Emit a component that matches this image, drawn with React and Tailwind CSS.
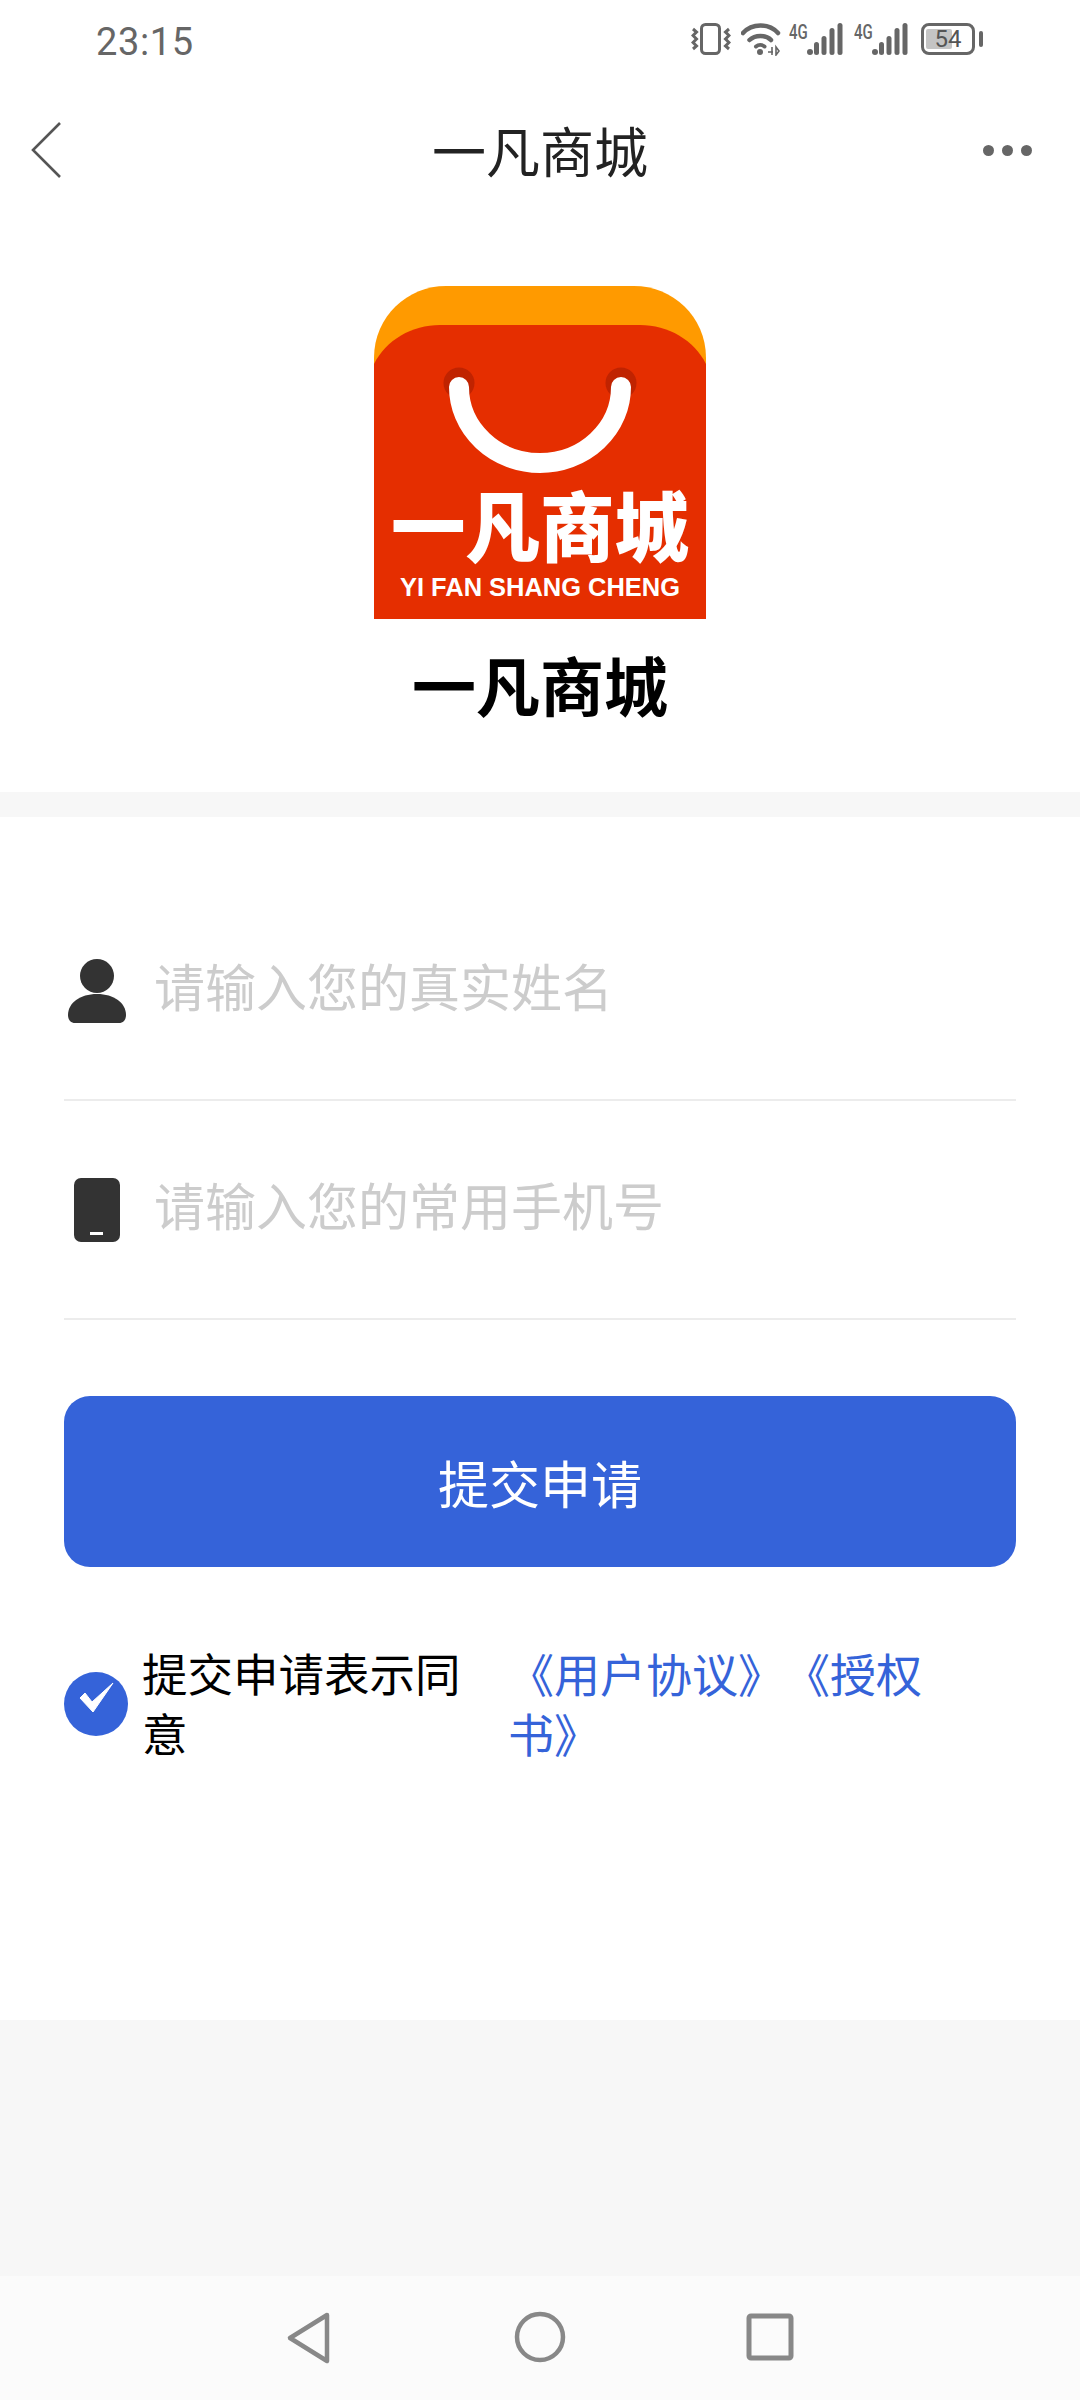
import React from 'react';

const cjk = '"Noto Sans CJK SC", "Noto Sans", sans-serif';

const Signal = () => (
    <div className="relative w-[54px] h-[32px]">
        <span className="absolute left-0 top-[-3px] origin-left scale-x-75 text-[20px] leading-[24px] font-medium text-[#666] font-['Roboto']">4G</span>
        <svg width="54" height="32" viewBox="0 0 54 32">
            <g fill="#666">
                <circle cx="21" cy="29" r="3" />
                <rect x="25" y="19" width="5" height="13" rx="2.5" />
                <rect x="32.5" y="13" width="5" height="19" rx="2.5" />
                <rect x="40.5" y="5" width="5" height="27" rx="2.5" />
                <rect x="48.5" y="0" width="5" height="32" rx="2.5" />
            </g>
        </svg>
    </div>
);

const StatusIcons = () => (
    <div className="ml-auto mr-[97px] mb-[6px] flex items-center h-[32px]">
        <svg width="40" height="32" viewBox="0 0 40 32" fill="none" stroke="#666">
            <rect x="10.5" y="1.5" width="18" height="29" rx="4" strokeWidth="3" />
            <path d="M2 6 l3.5 3 -3.5 3.5 3.5 3.5 -3.5 3.5 3.5 3.5 -3.5 3" strokeWidth="3" />
            <path d="M38 6 l-3.5 3 3.5 3.5 -3.5 3.5 3.5 3.5 -3.5 3.5 3.5 3" strokeWidth="3" />
        </svg>
        <svg className="ml-[10px]" width="40" height="34" viewBox="0 0 40 34" fill="none" stroke="#666" strokeWidth="4.5" strokeLinecap="round">
            <path d="M2 11 C11 1 28 1 37 11" />
            <path d="M8.5 18 C14 12.5 25 12.5 30 18" />
            <path d="M15 24.5 C17.5 22.5 21 22.5 23.5 24.5" strokeWidth="4" />
            <circle cx="19" cy="30" r="3" fill="#666" stroke="none" />
            <path d="M31 33 V25 M27 30 h5 M35 25 l3 4 -3 4z" strokeWidth="1.6" strokeLinecap="butt" />
        </svg>
        <div className="ml-[8px]"><Signal /></div>
        <div className="ml-[11px]"><Signal /></div>
        <div className="ml-[13px] relative w-[62px] h-[32px] flex items-center">
            <div className="relative w-[54px] h-[32px] rounded-[8px] border-[3px] border-[#666] overflow-hidden">
                <div className="w-[26px] h-[20px] mt-[3px] ml-[2px] rounded-[2px] bg-[#c4c4c4]" />
            </div>
            <div className="ml-[4px] w-[4px] h-[16px] rounded-[2px] bg-[#666]" />
            <span className="absolute left-[13px] top-0 w-[28px] text-center text-[24px] leading-[32px] text-[#555] font-['Roboto']">54</span>
        </div>
    </div>
);

// bag logo, shapes only; the lettering stays real text
const Logo = () => (
    <svg width="332" height="333" viewBox="0 0 332 333" className="block">
        <path d="M0 72 C0 30 34 0 72 0 H260 C298 0 332 30 332 72 V120 H0Z" fill="#ff9a00" />
        <path d="M0 78 C12 54 38 39 66 39 H266 C294 39 320 54 332 78 V333 H0Z" fill="#e52e00" />
        <circle cx="85" cy="97" r="15.5" fill="#c02300" />
        <circle cx="247" cy="97" r="15.5" fill="#c02300" />
        <path d="M85 101 A81 76 0 0 0 247 101" fill="none" stroke="#fff" strokeWidth="20" strokeLinecap="round" />
        <text x="17" y="270" textLength="298" lengthAdjust="spacingAndGlyphs" fontSize="76" fontWeight="900" fill="#fff" fontFamily={cjk}>一凡商城</text>
        <text x="26" y="310" textLength="280" lengthAdjust="spacingAndGlyphs" fontSize="26" fontWeight="700" fill="#fff" fontFamily="'Liberation Sans', sans-serif">YI FAN SHANG CHENG</text>
    </svg>
);

const UserIcon = () => (
    <svg width="58" height="64" viewBox="0 0 58 64" fill="#333">
        <circle cx="29" cy="17" r="17" />
        <path d="M0 56 C0 44 12 35 29 35 C46 35 58 44 58 56 C58 61 55 64 51 64 H7 C3 64 0 61 0 56Z" />
    </svg>
);

const PhoneIcon = () => (
    <svg width="46" height="64" viewBox="0 0 46 64">
        <rect width="46" height="64" rx="7" fill="#333" />
        <rect x="16" y="54" width="13" height="3" fill="#fff" />
    </svg>
);

const Field = ({ icon, text, iconBox }) => (
    <div className="h-[219px] flex items-center border-b-2 border-[#ececec]">
        <div className={iconBox}>{icon}</div>
        <span className="mb-[12px] text-[51px] leading-[60px] text-[#cccccc]">{text}</span>
    </div>
);

const App = () => {
    return (
        <div className="w-[1080px] h-[2400px] flex flex-col bg-white overflow-hidden" style={{ fontFamily: cjk }}>
            <div className="h-[84px] flex items-center shrink-0">
                <span className="ml-[96px] text-[38px] leading-[44px] text-[#666] font-['Roboto'] tracking-[0.6px]">23:15</span>
                <StatusIcons />
            </div>

            <div className="h-[132px] flex items-center justify-between relative shrink-0">
                <svg className="ml-[31px]" width="30" height="56" viewBox="0 0 30 56" fill="none" stroke="#555" strokeWidth="2.6">
                    <path d="M29 1 L2 28 L29 55" />
                </svg>
                <span className="absolute inset-x-0 text-center text-[54px] leading-[64px] text-[#222]">一凡商城</span>
                <div className="mr-[48px] flex gap-[8px]">
                    <div className="w-[11px] h-[11px] rounded-full bg-[#666]" />
                    <div className="w-[11px] h-[11px] rounded-full bg-[#666]" />
                    <div className="w-[11px] h-[11px] rounded-full bg-[#666]" />
                </div>
            </div>

            <div className="flex flex-col items-center pt-[70px] shrink-0">
                <Logo />
                <h1 className="mt-[24px] text-[64px] leading-[80px] font-bold text-black">一凡商城</h1>
            </div>

            <div className="h-[25px] mt-[69px] bg-[#f7f7f7] shrink-0" />

            <div className="px-[64px] pt-[65px] shrink-0">
                <Field icon={<UserIcon />} iconBox="w-[90px] pl-[4px]" text="请输入您的真实姓名" />
                <Field icon={<PhoneIcon />} iconBox="w-[90px] pl-[10px]" text="请输入您的常用手机号" />
                <div className="mt-[76px] h-[171px] rounded-[26px] bg-[#3563d9] flex items-center justify-center text-[51px] leading-[60px] text-white">提交申请</div>
                <div className="mt-[75px] flex items-center">
                    <svg className="shrink-0 mt-[4px]" width="64" height="64" viewBox="0 0 64 64">
                        <circle cx="32" cy="32" r="32" fill="#3563d9" />
                        <path d="M16 26 L21 21 L28 30 L49 11 L29 40Z" fill="#fff" stroke="#fff" strokeWidth="1" strokeLinejoin="round" />
                    </svg>
                    <div className="ml-[14px] w-[366px] pr-[30px] text-[45.5px] leading-[60px] text-black">提交申请表示同意</div>
                    <div className="w-[440px] text-[46px] leading-[60px] text-[#3563d9] [text-spacing-trim:space-all]">《用户协议》《授权书》</div>
                </div>
            </div>

            <div className="flex-1" />
            <div className="h-[256px] bg-[#f7f7f7] shrink-0" />
            <div className="h-[124px] bg-[#fbfbfb] flex items-start shrink-0 pt-[35px] pl-[286px]">
                <svg width="46" height="54" viewBox="0 0 46 54" fill="none" stroke="#888" strokeWidth="4.5" strokeLinejoin="round">
                    <path d="M41 4 L4 27 L41 50Z" />
                </svg>
                <svg className="ml-[182px]" width="52" height="52" viewBox="0 0 52 52" fill="none" stroke="#888" strokeWidth="4.5">
                    <circle cx="26" cy="26" r="23" />
                </svg>
                <svg className="ml-[180px] mt-[2px]" width="48" height="48" viewBox="0 0 48 48" fill="none" stroke="#888" strokeWidth="5">
                    <rect x="3" y="3" width="42" height="42" rx="2" />
                </svg>
            </div>
        </div>
    );
};

export default App;
